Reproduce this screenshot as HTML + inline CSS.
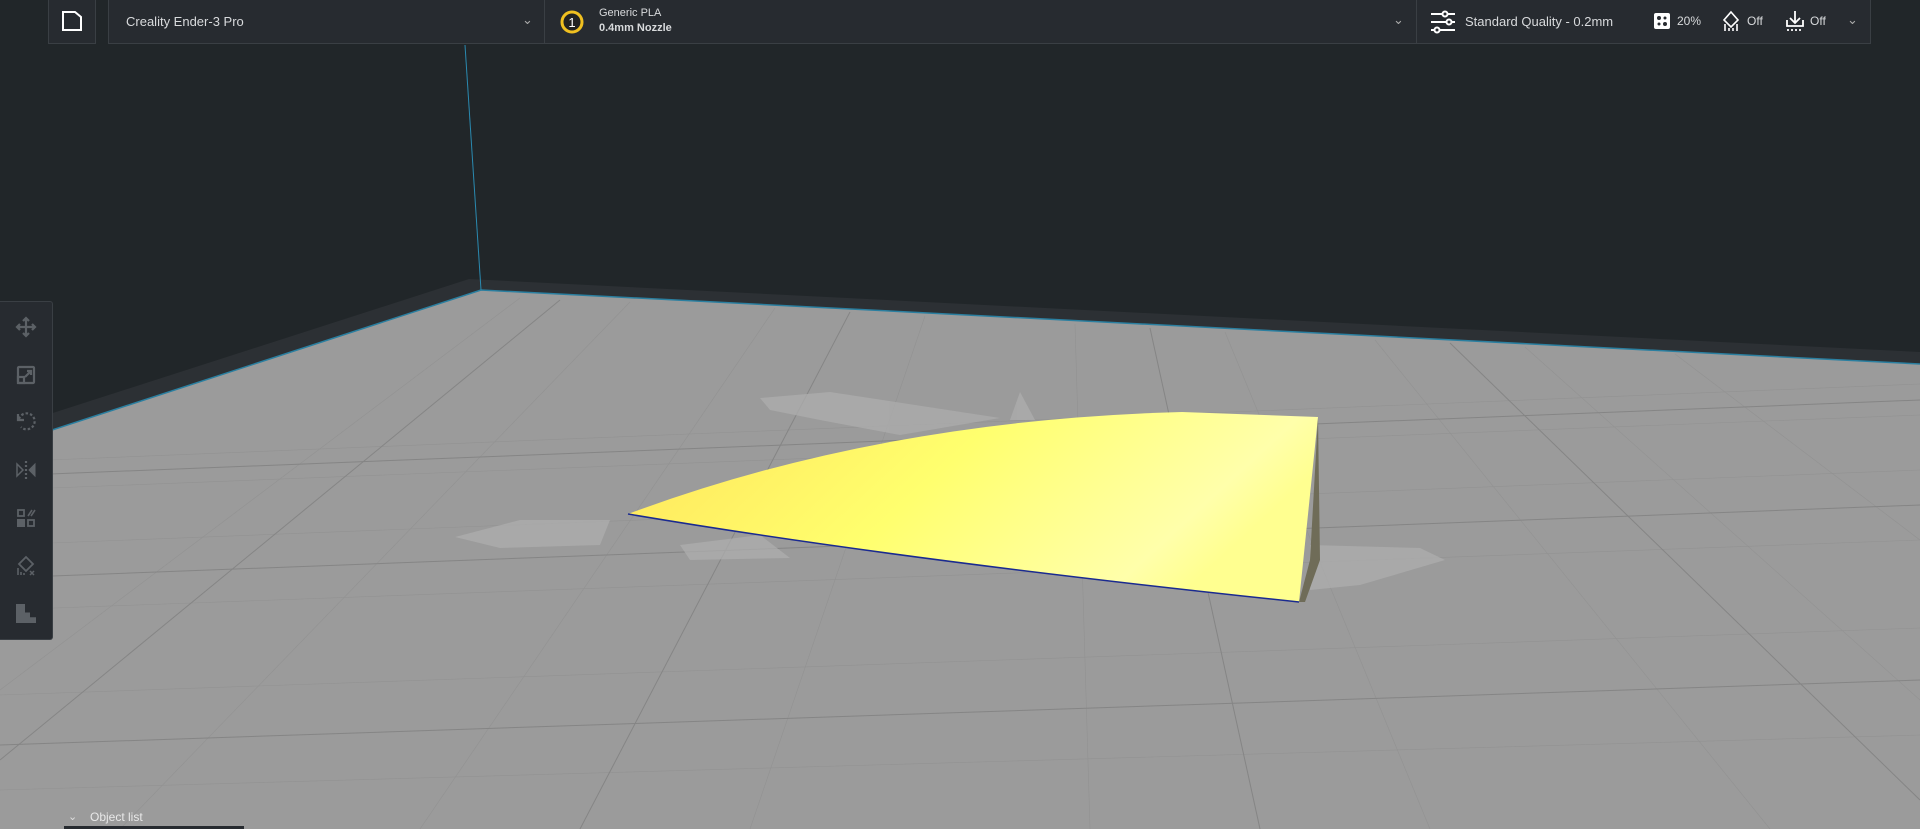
<!DOCTYPE html>
<html><head><meta charset="utf-8"><style>
html,body{margin:0;padding:0;width:1920px;height:829px;overflow:hidden;background:#212629;font-family:"Liberation Sans",sans-serif}
.bar{position:absolute;top:0;height:44px;background:#272b30;border:1px solid #3a3f44;border-top:none;box-sizing:border-box;color:#d8dadc;font-size:13px}
.t{position:absolute;white-space:nowrap}
</style></head><body>
<svg width="1920" height="829" style="position:absolute;left:0;top:0">
<defs>
<linearGradient id="y" x1="0" y1="0" x2="1" y2="0.3">
<stop offset="0" stop-color="#ffe45a"/><stop offset="0.5" stop-color="#ffff6e"/><stop offset="0.9" stop-color="#ffffaa"/><stop offset="1" stop-color="#ffff90"/></linearGradient>
</defs>
<rect width="1920" height="829" fill="#212629"/>
<polygon points="0,430 469,279 1920,352 1920,364 481,290 0,447" fill="#2c3034"/>
<polygon points="0,447 481,290 1920,364 1920,829 0,829" fill="#9b9b9b"/>
<polyline points="0,447 481,290 1920,364" fill="none" stroke="#2a7fa0" stroke-width="1.5"/>
<line x1="465" y1="45" x2="481" y2="290" stroke="#2a8ab0" stroke-width="1"/>
<g stroke="#929292" stroke-width="0.6" fill="none">
<line x1="0" y1="462" x2="1920" y2="384"/><line x1="0" y1="490" x2="1920" y2="415"/>
<line x1="0" y1="545" x2="1920" y2="470"/><line x1="0" y1="610" x2="1920" y2="540"/>
<line x1="0" y1="695" x2="1920" y2="628"/><line x1="0" y1="790" x2="1920" y2="735"/>
<line x1="520" y1="298" x2="0" y2="690"/><line x1="630" y1="302" x2="120" y2="829"/>
<line x1="775" y1="308" x2="420" y2="829"/><line x1="925" y1="316" x2="750" y2="829"/>
<line x1="1075" y1="324" x2="1090" y2="829"/><line x1="1225" y1="332" x2="1430" y2="829"/>
<line x1="1375" y1="340" x2="1770" y2="829"/><line x1="1525" y1="347" x2="1920" y2="700"/><line x1="1675" y1="354" x2="1920" y2="540"/>
</g>
<g stroke="#858585" stroke-width="1" fill="none">
<line x1="0" y1="476" x2="1920" y2="400"/><line x1="0" y1="578" x2="1920" y2="505"/>
<line x1="0" y1="745" x2="1920" y2="680"/>
<line x1="560" y1="300" x2="0" y2="760"/><line x1="850" y1="312" x2="580" y2="829"/>
<line x1="1150" y1="328" x2="1260" y2="829"/><line x1="1450" y1="343" x2="1920" y2="800"/>
</g>
<g fill="#adadad" opacity="0.75">
<polygon points="760,398 830,392 1000,418 900,435 820,420 770,410"/>
<polygon points="1010,420 1020,392 1035,420"/>
<polygon points="455,537 520,520 610,520 600,545 500,548"/>
<polygon points="680,545 760,535 790,558 690,560"/>
<polygon points="1310,545 1420,548 1445,560 1360,585 1310,590"/>
</g>
<polygon points="1318,417 1310,560 1299,602 1305,602 1320,560" fill="#6f6c58"/>
<path d="M628,514 Q880,420 1182,412 L1318,417 L1299,602 Q900,560 628,514 Z" fill="url(#y)"/>
<path d="M628,514 Q900,560 1299,602" fill="none" stroke="#1a2a90" stroke-width="1.5"/>
</svg>
<div class="bar" style="left:48px;width:48px;border-left:1px solid #3a3f44"><svg width="24" height="24" style="position:absolute;left:11px;top:9px" viewBox="0 0 24 24"><path d="M3,3 H15 L21,8 V21 H3 Z" fill="none" stroke="#fff" stroke-width="2"/></svg></div>
<div class="bar" style="left:108px;width:437px;border-left:1px solid #3a3f44"><span class="t" style="left:17px;top:14px">Creality Ender-3 Pro</span><span class="t" style="left:413px;top:12px;color:#aaa">⌄</span></div>
<div class="bar" style="left:544px;width:873px"><svg width="26" height="26" style="position:absolute;left:14px;top:9px"><circle cx="13" cy="13" r="10" fill="#222" stroke="#f0c020" stroke-width="3"/><text x="13" y="18" font-size="13" fill="#fff" text-anchor="middle" font-family="Liberation Sans">1</text></svg><span class="t" style="left:54px;top:7px;font-size:11px">Generic PLA</span><span class="t" style="left:54px;top:22px;font-size:11px;font-weight:bold">0.4mm Nozzle</span><span class="t" style="left:848px;top:12px;color:#aaa">⌄</span></div>
<div class="bar" style="left:1416px;width:455px;border-left:1px solid #3a3f44">
<svg width="24" height="24" style="position:absolute;left:14px;top:10px" stroke="#fff" stroke-width="2" fill="none"><line x1="0" y1="4" x2="24" y2="4"/><line x1="0" y1="12" x2="24" y2="12"/><line x1="0" y1="20" x2="24" y2="20"/><circle cx="14" cy="4" r="2.5" fill="#272b30"/><circle cx="18" cy="12" r="2.5" fill="#272b30"/><circle cx="6" cy="20" r="2.5" fill="#272b30"/></svg>
<span class="t" style="left:48px;top:14px">Standard Quality - 0.2mm</span>
<svg width="18" height="18" style="position:absolute;left:236px;top:12px"><rect x="1" y="1" width="16" height="16" rx="2" fill="#fff"/><circle cx="6" cy="6" r="2" fill="#272b30"/><circle cx="12" cy="12" r="2" fill="#272b30"/><circle cx="12" cy="6" r="1.5" fill="#272b30"/><circle cx="6" cy="12" r="1.5" fill="#272b30"/></svg>
<span class="t" style="left:260px;top:14px;font-size:12px">20%</span>
<svg width="20" height="22" style="position:absolute;left:304px;top:10px" stroke="#fff" stroke-width="1.6" fill="none"><path d="M10,2 L17,10 L10,17 L3,10 Z"/><line x1="4" y1="14" x2="4" y2="21"/><line x1="8" y1="18" x2="8" y2="21"/><line x1="12" y1="18" x2="12" y2="21"/><line x1="16" y1="14" x2="16" y2="21"/></svg>
<span class="t" style="left:330px;top:14px;font-size:12px">Off</span>
<svg width="20" height="22" style="position:absolute;left:368px;top:10px" stroke="#fff" stroke-width="1.8" fill="none"><line x1="10" y1="1" x2="10" y2="12"/><path d="M5,8 L10,13 L15,8"/><path d="M2,10 V16 H18 V10"/><line x1="2" y1="20" x2="18" y2="20" stroke-dasharray="2,2"/></svg>
<span class="t" style="left:393px;top:14px;font-size:12px">Off</span>
<span class="t" style="left:430px;top:12px;color:#aaa">⌄</span></div>
<div style="position:absolute;left:0;top:301px;width:52px;height:337px;background:#272b30;border:1px solid #3a3f44;border-left:none;border-radius:0 3px 3px 0">
<svg width="52" height="337" stroke="#5c6166" stroke-width="2.2" fill="none">
<g transform="translate(26,25)"><path d="M0,-9 V9 M-9,0 H9 M-3,-6 L0,-9 L3,-6 M-3,6 L0,9 L3,6 M-6,-3 L-9,0 L-6,3 M6,-3 L9,0 L6,3"/></g>
<g transform="translate(26,73)"><rect x="-8" y="-8" width="16" height="16" rx="1"/><path d="M-1,2 L5,-4 M1,-4 H5 V0"/><rect x="-8" y="2" width="6" height="6"/></g>
<g transform="translate(26,120)"><path d="M-7,-3 A8,8 0 1,1 -5,5" stroke-dasharray="2.5,2"/><path d="M-8,-8 V-2 H-2"/></g>
<g transform="translate(26,168)"><path d="M-9,-6 L-3,0 L-9,6 Z" stroke-width="1.5"/><path d="M9,-6 L3,0 L9,6 Z" fill="#5c6166" stroke-width="1"/><line x1="0" y1="-9" x2="0" y2="9" stroke-dasharray="2,2"/></g>
<g transform="translate(26,216)"><rect x="-8" y="-8" width="6" height="6" stroke-width="1.8"/><rect x="2" y="2" width="6" height="6" stroke-width="1.8"/><rect x="-9" y="1" width="8" height="8" fill="#5c6166" stroke="none"/><path d="M2,-2 L6,-8 M5,-2 L9,-8" stroke-width="1.6"/></g>
<g transform="translate(26,264)"><path d="M0,-9 L7,-2 L0,5 L-7,-2 Z" stroke-width="1.8"/><path d="M-8,2 V9 M-5,6 V9 M-2,7 V9" stroke-width="1.6"/><path d="M4,5 L8,9 M8,5 L4,9" stroke-width="1.5"/></g>
</svg>
<div style="position:absolute;left:16px;top:302px;width:20px;height:19px;background:#5c6166;clip-path:polygon(0 0,45% 0,45% 45%,70% 45%,70% 70%,100% 70%,100% 100%,0 100%)"></div>
</div>
<span class="t" style="left:68px;top:810px;color:#ddd;font-size:11px">⌄</span>
<span class="t" style="left:90px;top:810px;color:#e8e8e8;font-size:12px">Object list</span>
<div style="position:absolute;left:64px;top:826px;width:180px;height:3px;background:#272b30"></div>
</body></html>
